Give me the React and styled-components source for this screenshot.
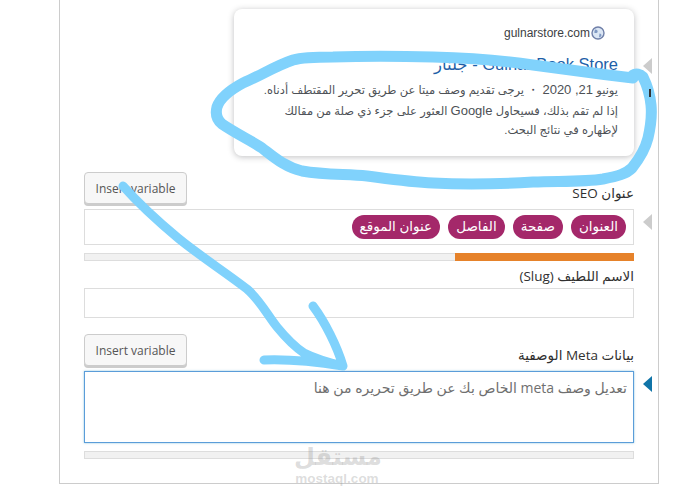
import React from 'react';
import styled, { createGlobalStyle } from 'styled-components';

const GlobalStyle = createGlobalStyle`
  html, body {
    margin: 0;
    padding: 0;
    background: #fff;
    overflow: hidden;
  }
  body {
    font-family: "Open Sans", "DejaVu Sans", sans-serif;
  }
`;

const Page = styled.div`
  position: relative;
  width: 673px;
  height: 494px;
  overflow: hidden;
  background: #fff;
`;

const Panel = styled.div`
  box-sizing: border-box;
  width: 600px;
  height: 484px;
  margin-left: 59px;
  padding: 9px 0 0 24px;
  border: 1px solid #ccc;
  border-width: 0 1px 1px 1px;
  display: flex;
  flex-direction: column;
`;

const FieldRow = styled.div`
  display: flex;
  align-items: flex-start;
  gap: 9px;
`;

const Marker = styled.span`
  flex: none;
  width: 0;
  height: 0;
  margin-top: ${p => p.$top}px;
  border-style: solid;
  border-width: 8px 9px 8px 0;
  border-color: transparent ${p => (p.$active ? '#1074a8' : '#ccc')} transparent transparent;
`;

const Card = styled.div`
  box-sizing: border-box;
  width: 400px;
  height: 147px;
  margin-left: 150px;
  padding: 15px 16px 0 16px;
  background: #fff;
  border-radius: 8px;
  box-shadow: 0 1px 6px rgba(32, 33, 36, 0.28);
  direction: rtl;
  font-family: "Liberation Sans", "DejaVu Sans", sans-serif;
`;

const UrlLine = styled.div`
  display: flex;
  align-items: center;
  gap: 1px;
  height: 18px;
  padding-right: 13px;
  font-size: 12px;
  color: #3c4043;
`;

const Title = styled.div`
  margin-top: 10px;
  height: 24px;
  font-size: 16.5px;
  line-height: 24px;
  color: #1e5fa8;
  white-space: nowrap;
`;

const Snippet = styled.div`
  margin-top: 4px;
  font-size: 11.5px;
  line-height: 19.5px;
  color: #4d5156;
`;

const Latin = styled.span`
  font-size: 13px;
`;

const LabelRow = styled.div`
  width: 550px;
  height: ${p => p.$height}px;
  display: flex;
  justify-content: space-between;
  align-items: flex-end;
  margin-top: ${p => p.$top || 0}px;
  margin-bottom: ${p => p.$after || 0}px;
`;

const InsertButton = styled.button`
  box-sizing: border-box;
  width: 103px;
  height: 32px;
  padding: 0;
  background: #f7f7f7;
  border: 1px solid #ccc;
  border-radius: 4px;
  box-shadow: 0 2px 0 #ccc;
  color: #555;
  font-family: "Open Sans", sans-serif;
  font-size: 12px;
`;

const Label = styled.div`
  direction: rtl;
  font-size: 13.5px;
  line-height: 16px;
  color: #303030;
  padding-bottom: ${p => p.$bottom || 0}px;
`;

const Input = styled.div`
  box-sizing: border-box;
  width: 550px;
  height: ${p => p.$height}px;
  border: 1px solid #ddd;
  background: #fff;
  direction: rtl;
  display: flex;
  align-items: center;
  gap: 8px;
  padding: 0 7px;
`;

const Pill = styled.span`
  height: 24px;
  padding: 0 8px;
  border-radius: 12px;
  background: #a4286a;
  color: #fff;
  font-size: 13.5px;
  font-weight: 500;
  line-height: 22px;
  white-space: nowrap;
`;

const Editor = styled.div`
  box-sizing: border-box;
  width: 550px;
  height: 72px;
  padding: 6px 6px;
  border: 1px solid #5b9dd9;
  box-shadow: 0 0 2px rgba(30, 140, 190, 0.5);
  direction: rtl;
  font-size: 14px;
  line-height: 20px;
  color: #6f6f6f;
`;

const Progress = styled.div`
  box-sizing: border-box;
  width: 550px;
  height: 8px;
  margin-top: 8px;
  border: 1px solid #ddd;
  background: #f1f1f1;
  display: flex;
  justify-content: flex-end;
`;

const ProgressFill = styled.div`
  width: ${p => p.$value}%;
  margin: -1px -1px -1px 0;
  background: #e6822a;
`;

const Overlay = styled.svg`
  position: absolute;
  left: 0;
  top: 0;
  pointer-events: none;
`;

const Watermark = styled.div`
  position: absolute;
  left: 294px;
  top: 443px;
  width: 86px;
  text-align: center;
  color: rgba(140, 140, 140, 0.3);
  font-family: "DejaVu Sans", sans-serif;
`;

const WatermarkLogo = styled.div`
  font-size: 24px;
  font-weight: 700;
  line-height: 29px;
`;

const WatermarkSite = styled.div`
  font-family: "Liberation Sans", sans-serif;
  font-size: 13.5px;
  font-weight: 700;
  line-height: 14px;
`;

const Globe = () => (
  <svg width="14" height="14" viewBox="0 0 14 14">
    <circle cx="7" cy="7" r="6" fill="#dbe6f4" stroke="#6f7fa8" strokeWidth="1.4" />
    <path d="M4 3.5c2 0 3 1 2.6 2.4C6 7.4 4 7 3.2 6.4M8.5 7.5c1.5 0 2.3 1 1.8 2.4-.6 1-1.6 1.4-2.3 1.3z" fill="#7f98c2" />
  </svg>
);

const App = () => (
  <Page>
    <GlobalStyle />
    <Panel>
      <FieldRow>
        <Card>
          <UrlLine>
            <Globe />
            <span dir="ltr">gulnarstore.com</span>
          </UrlLine>
          <Title>Gulnar Book Store - جلنار</Title>
          <Snippet>
            يونيو <Latin>21, 2020</Latin> ・ يرجى تقديم وصف ميتا عن طريق تحرير المقتطف أدناه. إذا لم تقم بذلك، فسيحاول <Latin>Google</Latin> العثور على جزء ذي صلة من مقالك لإظهاره في نتائج البحث.
          </Snippet>
        </Card>
        <Marker $top={49} />
      </FieldRow>

      <LabelRow $top={16} $height={32} $after={5}>
        <InsertButton>Insert variable</InsertButton>
        <Label $bottom={3}>عنوان SEO</Label>
      </LabelRow>
      <FieldRow>
        <Input $height={36}>
          <Pill>العنوان</Pill>
          <Pill>صفحة</Pill>
          <Pill>الفاصل</Pill>
          <Pill>عنوان الموقع</Pill>
        </Input>
        <Marker $top={5} />
      </FieldRow>
      <Progress>
        <ProgressFill $value={32.6} />
      </Progress>

      <LabelRow $top={7} $height={16} $after={4}>
        <span />
        <Label>الاسم اللطيف (Slug)</Label>
      </LabelRow>
      <Input $height={30} />

      <LabelRow $top={16} $height={32} $after={5}>
        <InsertButton>Insert variable</InsertButton>
        <Label $bottom={3}>بيانات Meta الوصفية</Label>
      </LabelRow>
      <FieldRow>
        <Editor>تعديل وصف meta الخاص بك عن طريق تحريره من هنا</Editor>
        <Marker $active $top={5} />
      </FieldRow>
      <Progress />
    </Panel>

    <Watermark>
      <WatermarkLogo>مستقل</WatermarkLogo>
      <WatermarkSite>mostaql.com</WatermarkSite>
    </Watermark>

    <Overlay width="673" height="494" viewBox="0 0 673 494" fill="none">
      <path
        d="M633 78C600 74 570 70 533 65C500 60 470 58 433 57C400 56 360 56 333 57C315 57 300 58 293 60C275 66 260 76 243 83C230 90 220 98 217 107C215 115 217 120 222 124C235 133 250 140 262 148C275 158 285 167 302 171C325 175 345 174 367 176C390 179 410 182 433 183C470 185 500 184 533 182C560 181 585 182 603 179C618 176 626 174 632 168C640 158 645 150 648 138C651 125 652 115 651 105C650 95 647 85 643 77C640 74 636 73 633 75"
        stroke="#80d2fc"
        strokeWidth="11"
        strokeLinecap="round"
        strokeLinejoin="round"
      />
      <path d="M650 89v8" stroke="#333" strokeWidth="2" />
      <path
        d="M123 186C140 205 160 223 178 238C200 256 225 272 247 289C260 300 268 316 277 327C286 338 295 347 304 353C318 360 330 363 343 366M264 360C290 359 318 362 343 366C337 346 325 322 313 306"
        stroke="#80d2fc"
        strokeWidth="9"
        strokeLinecap="round"
        strokeLinejoin="round"
      />
    </Overlay>
  </Page>
);

export default App;
